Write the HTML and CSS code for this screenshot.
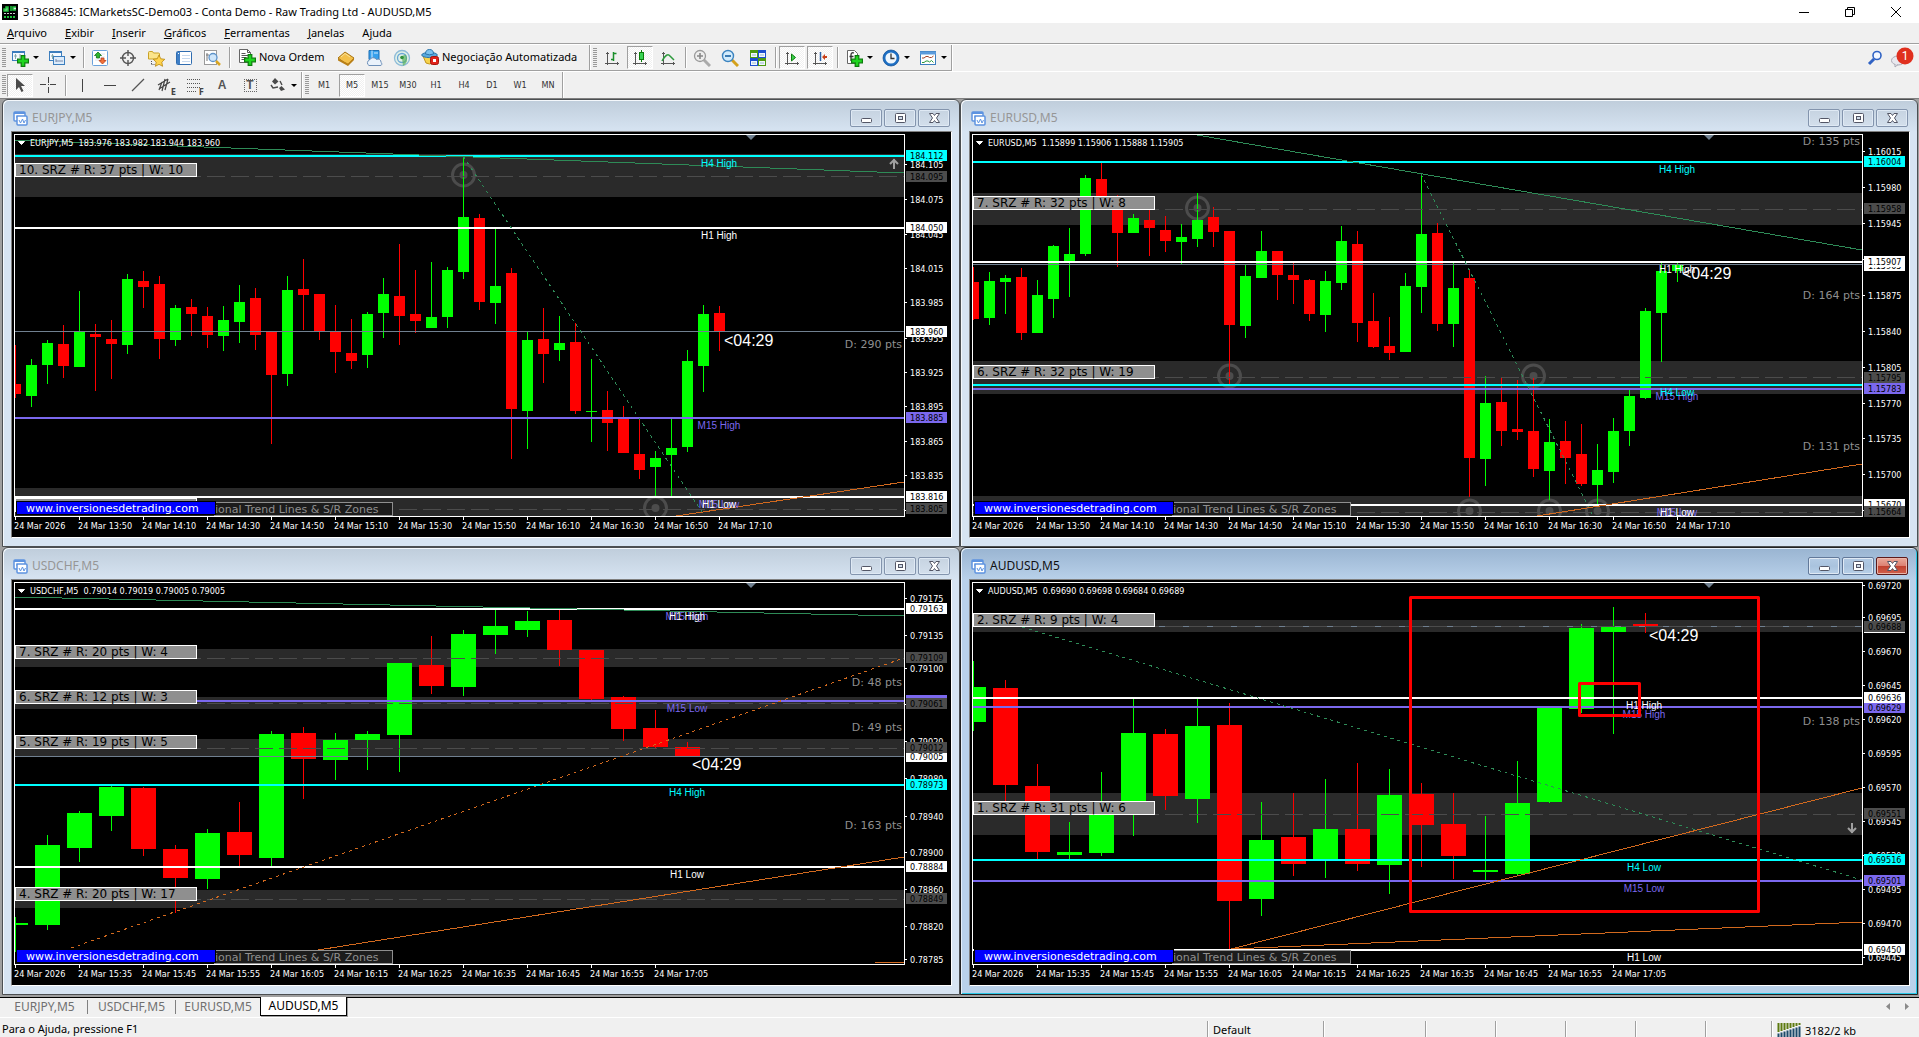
FILE: index.html
```html
<!DOCTYPE html>
<html lang="pt">
<head>
<meta charset="utf-8">
<title>31368845: ICMarketsSC-Demo03 - Conta Demo - Raw Trading Ltd - AUDUSD,M5</title>
<link rel="stylesheet" href="styles.css">
</head>
<body>
<svg class="defs" aria-hidden="true">
  <defs>
    <symbol id="win-min" viewBox="0 0 15 12"><rect x="2.5" y="6.5" width="10" height="4" rx="1" fill="#fff" stroke="#535666"/></symbol>
    <symbol id="win-max" viewBox="0 0 15 12"><rect x="2.5" y="1.500" width="10" height="9" rx="1" fill="#fff" stroke="#535666"/><rect x="5.500" y="4.500" width="4" height="3" fill="#cfdbe8" stroke="#535666"/></symbol>
    <symbol id="win-close" viewBox="0 0 15 12"><path d="M2.500 1.500h3.500l1.500 2 1.500-2h3.500l-3 4.500 3 4.500h-3.500l-1.500-2-1.500 2h-3.500l3-4.500z" fill="#fff" stroke="#535666"/></symbol>
    <symbol id="doc" viewBox="0 0 15 15"><rect x="1" y="1" width="11" height="9" rx="1" fill="#fff" stroke="#5d93e0" stroke-width="1.500"/><path d="M1 2h11" stroke="#5d93e0" stroke-width="2"/><path d="M3 6h1v-2" stroke="#5d93e0" fill="none"/><rect x="4" y="5" width="10" height="9" rx="1" fill="#fff" stroke="#5d93e0" stroke-width="1.500"/><path d="M6 9l1.500 3 2-4 1.500 4 1.500-3" fill="none" stroke="#5d93e0"/></symbol>
    <symbol id="axes" viewBox="0 0 18 18"><path d="M4.500 3v13M2 14.500h14M3 4.500h3M14.500 13v3" fill="none" stroke="#555"/></symbol>
    <symbol id="plus" viewBox="0 0 10 10"><path d="M3.500.500h3v3h3v3h-3v3h-3v-3h-3v-3h3z" fill="#1fd61f" stroke="#0b7d0b"/></symbol>
  </defs>
</svg>

<header class="titlebar">
  <svg class="app-icon" width="16" height="16"><rect width="16" height="16" fill="#000"/><path d="M2 7V5h2V3h2v4zM9 2v5M14 3h-3v3h3" stroke="#1fc23c" fill="#ddd" stroke-width="1.500"/><path d="M2 9.500h12" stroke="#ccc" stroke-dasharray="2 1"/><path d="M2 13h12" stroke="#1fc23c" stroke-width="2" stroke-dasharray="2 1"/></svg>
  <h1>31368845: ICMarketsSC-Demo03 - Conta Demo - Raw Trading Ltd - AUDUSD,M5</h1>
  <button aria-label="Minimizar"><svg width="12" height="12"><path d="M1 6.500h10" stroke="#000"/></svg></button>
  <button aria-label="Restaurar"><svg width="12" height="12"><path d="M1.500 3.500h7v7h-7zM3.500 3v-1.500h7v7h-2" fill="none" stroke="#000"/></svg></button>
  <button aria-label="Fechar"><svg width="12" height="12"><path d="M1 1l10 10M11 1l-10 10" stroke="#000"/></svg></button>
</header>

<nav class="menu">
  <button><u>A</u>rquivo</button><button><u>E</u>xibir</button><button><u>I</u>nserir</button><button><u>G</u>ráficos</button><button><u>F</u>erramentas</button><button><u>J</u>anelas</button><button>A<u>j</u>uda</button>
</nav>

<div class="toolbar">
  <div class="group">
    <span class="grip"></span>
    <button class="drop" aria-label="Novo gráfico"><svg width="18" height="18"><rect x="1.500" y="2.500" width="12" height="9" fill="#f4f9ff" stroke="#3b7dbd"/><path d="M1 3h13" stroke="#3b7dbd" stroke-width="2"/><path d="M4.500 5v5M3 7h3M9 5v4" stroke="#8aa"/><use href="#plus" x="6" y="6" width="12" height="12"/></svg></button>
    <button class="drop" aria-label="Perfis"><svg width="18" height="18"><rect x="1.500" y="2.500" width="12" height="9" fill="#f4f9ff" stroke="#3b7dbd"/><path d="M1 3h13" stroke="#3b7dbd" stroke-width="2"/><path d="M4.500 5v5M3 7h3" stroke="#8aa"/><rect x="5.500" y="7.500" width="11" height="8" fill="#dcebfa" stroke="#3b7dbd"/><path d="M8 12h7M8 10v3" stroke="#78a"/></svg></button>
    <span class="sep"></span>
    <button aria-label="Observação do mercado"><svg width="18" height="18"><rect x="1.500" y="1.500" width="15" height="15" rx="1" fill="#fff" stroke="#6aa2dc"/><path d="M4 5h10M4 8h10M4 11h10" stroke="#dde6f0"/><path d="M7 3l3.500 3.500h-2v2.500h-3V6.500h-2z" fill="#2cb52c" stroke="#12761a" stroke-width=".8"/><path d="M11.500 15l-3.500-3.500h2V9h3v2.500h2z" fill="#f2713a" stroke="#b8401a" stroke-width=".8"/></svg></button>
    <button aria-label="Janela de dados"><svg width="18" height="18"><circle cx="9" cy="9" r="5.500" fill="none" stroke="#555" stroke-width="1.400"/><path d="M9 1v6M9 11v6M1 9h6M11 9h6" stroke="#555" stroke-width="1.400"/></svg></button>
    <button aria-label="Navegador"><svg width="18" height="18"><path d="M1.500 3.500q0-1 1-1h3l1 1.500h5q1 0 1 1v5h-11z" fill="#fbe48a" stroke="#c9a227"/><path d="M4.500 12v4M4.500 15.500h3" stroke="#555" stroke-dasharray="1 1"/><path d="M12 6l1.800 3.800 4 .5-3 2.800.8 4.200-3.600-2-3.600 2 .8-4.200-3-2.800 4-.5z" fill="#ffd34d" stroke="#b8860b" stroke-width=".8"/></svg></button>
    <button aria-label="Terminal"><svg width="18" height="18"><rect x="1.500" y="2.500" width="15" height="13" rx="1" fill="#fff" stroke="#2f6cb0"/><rect x="2" y="3" width="3" height="12" fill="#3f7fc6"/><path d="M7 6.500h8M7 9.500h8M7 12.500h8" stroke="#c6d8ee"/><path d="M3 4.500h1" stroke="#fff"/></svg></button>
    <button aria-label="Testador de estratégia"><svg width="18" height="18"><rect x="1.500" y="1.500" width="12" height="14" fill="#fff" stroke="#9a9a9a"/><path d="M4 4v8M3 6h3M11 4v3" stroke="#777"/><circle cx="10" cy="8.500" r="4" fill="#cfe6fa" stroke="#5e93c9" stroke-width="1.300"/><path d="M13 12l4 4" stroke="#d9a520" stroke-width="2.500"/></svg></button>
    <span class="sep"></span>
    <button class="wide"><svg width="18" height="18"><path d="M1.500 1.500h8l3 3v10h-11z" fill="#fff" stroke="#666"/><path d="M9.500 1.500v3h3M3.500 5.500h4M3.500 7.500h7M3.500 9.500h5M3.500 11.500h4" stroke="#555" fill="none"/><use href="#plus" x="6" y="6" width="12" height="12"/></svg>Nova Ordem</button>
    <button aria-label="MetaEditor"><svg width="18" height="18"><path d="M1 9l7-6 9 6-6 7z" fill="#f3c04a" stroke="#a87412"/><path d="M1 9.500l10 5 6-5.500v2l-6 6-10-5.500z" fill="#b97f16"/><path d="M4 8l4-3.500 5 3.500" fill="none" stroke="#fbe29a"/></svg></button>
    <button aria-label="MQL5"><svg width="18" height="18"><path d="M4 1.500h10v9h-10z" fill="#36a0ec" stroke="#1c6fb5"/><path d="M7 1.500v9M9 4h4" stroke="#cfe9ff"/><path d="M4 16.500a3 3 0 01.5-5.500 4 4 0 017-.5 3 3 0 014.500 3 1.600 1.600 0 01-1 3z" fill="#eaf2fb" stroke="#6d8fb8"/></svg></button>
    <button aria-label="Sinais"><svg width="18" height="18"><circle cx="9" cy="9" r="7.500" fill="#e2f0e6" stroke="#8dbbd8" stroke-width="1.300"/><circle cx="9" cy="9" r="4.500" fill="none" stroke="#6aa6d6" stroke-width="1.300"/><path d="M9 9a3 3 0 014-3 8 8 0 01-3 11" fill="#58b25c" opacity=".7"/><circle cx="9" cy="8.500" r="1.800" fill="#2f8f3c"/></svg></button>
    <button class="wide auto"><svg width="18" height="18"><path d="M2 8h13l-3 7q-3.500 2-7 0z" fill="#f6d34c" stroke="#c1951d"/><ellipse cx="8.500" cy="7" rx="7.800" ry="2.600" fill="#59a9dd" stroke="#2c76ab"/><path d="M4.500 6q0-4.500 4-4.500t4 4.500q-4 1.600-8 0z" fill="#7cc2ee" stroke="#2c76ab"/><rect x="9.500" y="8.500" width="8" height="8" rx="2" fill="#e2231a" stroke="#a5130c"/><rect x="12" y="11" width="3" height="3" fill="#fff"/></svg>Negociação Automatizada</button>
  </div>
  <div class="group">
    <span class="grip"></span>
    <button aria-label="Barras"><svg width="18" height="18"><use href="#axes"/><path d="M10.500 3v9M8 10.500h2M11 4.500h2.500" stroke="#1a8f2a" stroke-width="1.500"/></svg></button>
    <button class="on" aria-label="Velas"><svg width="18" height="18"><use href="#axes"/><path d="M10.500 1v12" stroke="#0b7d0b"/><rect x="8.500" y="3.500" width="4" height="7" fill="#39d353" stroke="#0b7d0b"/></svg></button>
    <button aria-label="Linha"><svg width="18" height="18"><use href="#axes"/><path d="M3 12q5-9 8-5l4 4" fill="none" stroke="#2c9a3c" stroke-width="1.500"/></svg></button>
    <span class="sep"></span>
    <button aria-label="Ampliar"><svg width="18" height="18"><path d="M11 11l6 6" stroke="#aaa" stroke-width="3"/><circle cx="7" cy="7" r="5.500" fill="#eee" stroke="#999" stroke-width="1.300"/><path d="M4 7h6M7 4v6" stroke="#888" stroke-width="1.600"/></svg></button>
    <button aria-label="Reduzir"><svg width="18" height="18"><path d="M11 11l6 6" stroke="#d4a11c" stroke-width="3"/><circle cx="7" cy="7" r="5.500" fill="#d3ecfc" stroke="#3b83bf" stroke-width="1.400"/><path d="M4 7h6" stroke="#2a6fab" stroke-width="1.800"/></svg></button>
    <button aria-label="Lado a lado"><svg width="18" height="18"><rect x="1" y="1" width="8" height="8" fill="#4c9a12"/><rect x="9" y="1" width="8" height="8" fill="#1d4fd0"/><rect x="1" y="9" width="8" height="8" fill="#1d4fd0"/><rect x="9" y="9" width="8" height="8" fill="#4c9a12"/><path d="M2 4h6v4h-6zM10 4h6v4h-6zM2 12h6v4h-6zM10 12h6v4h-6z" fill="#f2f7ff"/><path d="M3 6h4M11 6h4M3 14h4M11 14h4" stroke="#9bc"/></svg></button>
    <span class="sep"></span>
    <button class="on" aria-label="Auto-rolagem"><svg width="18" height="18"><use href="#axes"/><path d="M8.500 5l4 3.500-4 3.500z" fill="#3ccf4e" stroke="#0b7d0b"/></svg></button>
    <button class="on" aria-label="Deslocar gráfico"><svg width="18" height="18"><use href="#axes"/><path d="M9.500 3v9" stroke="#2a62a8" stroke-width="1.500"/><path d="M11 8l3-3v2h2v2h-2v2z" fill="#c8401a"/></svg></button>
    <span class="sep"></span>
    <button class="drop" aria-label="Indicadores"><svg width="18" height="18"><path d="M2.500 1.500h7l3 3v10h-10z" fill="#fff" stroke="#666"/><path d="M9 4q-3-1-3 2v6M4.500 7.500h4" fill="none" stroke="#333" stroke-width="1.300"/><use href="#plus" x="6" y="6" width="12" height="12"/></svg></button>
    <button class="drop" aria-label="Períodos"><svg width="18" height="18"><circle cx="9" cy="9" r="6.800" fill="#eef6fd" stroke="#1d6fc4" stroke-width="2.400"/><circle cx="9" cy="9" r="8" fill="none" stroke="#0f4d94" stroke-width=".7"/><path d="M9 4.500v5h3.500" fill="none" stroke="#333" stroke-width="1.300"/></svg></button>
    <button class="drop" aria-label="Modelos"><svg width="18" height="18"><rect x="1.500" y="2.500" width="15" height="13" fill="#fff" stroke="#3b7dbd"/><path d="M1 4h16" stroke="#5b9bdc" stroke-width="3"/><path d="M3 9h2l2-1.500h2l1.500 1h2l2-1.500" fill="none" stroke="#a5432a"/><path d="M3 13.500h2l2-1.500h2l1.500 1 2-1.500 2 2" fill="none" stroke="#2c9a3c"/></svg></button>
  </div>
  <div class="corner">
    <button aria-label="Pesquisar"><svg width="16" height="18"><path d="M2 15l5-5" stroke="#2f62c4" stroke-width="3"/><circle cx="10" cy="6.500" r="4" fill="#f4f8ff" stroke="#2f62c4" stroke-width="1.600"/></svg></button>
    <button aria-label="Mensagens"><svg width="24" height="24"><ellipse cx="8" cy="15.500" rx="6.500" ry="4.500" fill="#e8e8ee" stroke="#a9a9b4"/><path d="M5 19v3l3-2.500" fill="#e8e8ee" stroke="#a9a9b4"/><circle cx="15" cy="11" r="8.500" fill="#e0301e"/></svg><b>1</b></button>
  </div>
</div>

<div class="toolbar second">
  <div class="group">
    <span class="grip"></span>
    <button class="on" aria-label="Cursor"><svg width="18" height="18"><path d="M5 2v12l3-3 2.500 5 2-1-2.500-5h4z" fill="#4a4a4a"/></svg></button>
    <button aria-label="Mira"><svg width="18" height="18"><path d="M9.500 1v6M9.500 11v6M1 8.500h6M11 8.500h6M9 8.500h1" stroke="#444"/></svg></button>
    <span class="sep"></span>
    <button aria-label="Linha vertical"><svg width="18" height="18"><path d="M9.500 3v13" stroke="#444"/></svg></button>
    <button aria-label="Linha horizontal"><svg width="18" height="18"><path d="M3 9.500h12" stroke="#444"/></svg></button>
    <button aria-label="Linha de tendência"><svg width="18" height="18"><path d="M3 15L15 3" stroke="#555" stroke-width="1.200"/></svg></button>
    <button class="tagged" aria-label="Canal"><svg width="18" height="18"><path d="M1 9L11 3M2 13L13 6M5 15L8 3M8 14l3-11M2 14l3-8" stroke="#444" stroke-width="1.200"/></svg><small>E</small></button>
    <button class="tagged" aria-label="Fibonacci"><svg width="18" height="18"><path d="M2 3.500h14M2 7.500h14M2 11.500h14M2 15.500h9" stroke="#555" stroke-dasharray="1 1"/></svg><small>F</small></button>
    <button class="glyph">A</button>
    <button class="glyph box"><span>T</span></button>
    <button class="drop" aria-label="Setas"><svg width="18" height="18"><path d="M6 2l3.500 3.500-3.500 3-3-3zM12.500 10l3.500 3.500-4 1.500-2-3z" fill="#4a4a4a"/><path d="M2 9l2 3 5-1M11 5l2 4" stroke="#4a4a4a" fill="none" stroke-width="1.400"/></svg></button>
  </div>
  <div class="group frames">
    <span class="grip"></span>
    <button>M1</button><button class="on">M5</button><button>M15</button><button>M30</button><button>H1</button><button>H4</button><button>D1</button><button>W1</button><button>MN</button>
  </div>
</div>

<main class="desk">
  <section class="window">
    <div class="caption"><svg width="15" height="15"><use href="#doc"/></svg><h2>EURJPY,M5</h2>
      <button aria-label="Minimizar"><svg width="15" height="12"><use href="#win-min"/></svg></button><button aria-label="Maximizar"><svg width="15" height="12"><use href="#win-max"/></svg></button><button aria-label="Fechar"><svg width="15" height="12"><use href="#win-close"/></svg></button></div>
    <div class="frame" data-chart="eurjpy"></div>
  </section>
  <section class="window">
    <div class="caption"><svg width="15" height="15"><use href="#doc"/></svg><h2>EURUSD,M5</h2>
      <button aria-label="Minimizar"><svg width="15" height="12"><use href="#win-min"/></svg></button><button aria-label="Maximizar"><svg width="15" height="12"><use href="#win-max"/></svg></button><button aria-label="Fechar"><svg width="15" height="12"><use href="#win-close"/></svg></button></div>
    <div class="frame" data-chart="eurusd"></div>
  </section>
  <section class="window">
    <div class="caption"><svg width="15" height="15"><use href="#doc"/></svg><h2>USDCHF,M5</h2>
      <button aria-label="Minimizar"><svg width="15" height="12"><use href="#win-min"/></svg></button><button aria-label="Maximizar"><svg width="15" height="12"><use href="#win-max"/></svg></button><button aria-label="Fechar"><svg width="15" height="12"><use href="#win-close"/></svg></button></div>
    <div class="frame" data-chart="usdchf"></div>
  </section>
  <section class="window active">
    <div class="caption"><svg width="15" height="15"><use href="#doc"/></svg><h2>AUDUSD,M5</h2>
      <button aria-label="Minimizar"><svg width="15" height="12"><use href="#win-min"/></svg></button><button aria-label="Maximizar"><svg width="15" height="12"><use href="#win-max"/></svg></button><button class="close" aria-label="Fechar"><svg width="15" height="12"><use href="#win-close"/></svg></button></div>
    <div class="frame" data-chart="audusd"></div>
  </section>
</main>

<div class="tabs">
  <button>EURJPY,M5</button><button>USDCHF,M5</button><button>EURUSD,M5</button><button class="current">AUDUSD,M5</button>
  <span class="scroll"><svg width="24" height="8"><path d="M5 0v7L1 3.500zM20 0v7l4-3.500z" fill="#8a8a8a"/></svg></span>
</div>

<footer class="status">
  <span class="help">Para o Ajuda, pressione F1</span>
  <span class="cell c116">Default</span><span class="cell c102"></span><span class="cell c71"></span><span class="cell c71"></span><span class="cell c71"></span><span class="cell c71"></span><span class="cell c66"></span>
  <span class="cell net"><svg width="24" height="14"><path d="M1.500 0v9M4.500 0v8M7.500 0v7M10.500 0v6M13.500 0v5M16.500 0v4M19.500 0v3M22.500 0v2" stroke="#5d7a10" stroke-width="2"/><path d="M1.500 10.500V14M4.500 9.500V14M7.500 8.500V14M10.500 7.500V14M13.500 6.500V14M16.500 5.500V14M19.500 4.500V14M22.500 3.500V14" stroke="#1d4a6b" stroke-width="2"/></svg>3182/2 kb</span>
</footer>
<script src="charts.js"></script>
</body>
</html>
```
FILE: styles.css
```css
* { box-sizing: border-box; }
html, body { height: 100%; margin: 0; }
body {
  display: flex;
  flex-direction: column;
  min-height: 100vh;
  overflow: hidden;
  background: #f0f0f0;
  color: #000;
  font: 11px/16px "Noto Sans", "Open Sans", sans-serif;
}
button { padding: 0; border: 0; background: none; font: inherit; color: inherit; }
svg { display: block; }
h1, h2 { margin: 0; font: inherit; }
.defs { position: absolute; width: 0; height: 0; }

.titlebar { display: flex; align-items: center; height: 23px; padding-left: 2px; background: #fff; }
.titlebar h1 { flex: 1; padding: 1px 0 0 5px; }
.titlebar button { display: grid; place-items: center; width: 46px; height: 20px; }

.menu { display: flex; height: 21px; border-bottom: 1px solid #a0a0a0; }
.menu button { padding: 0 9px; line-height: 20px; }
.menu button:first-child { padding-left: 7px; }

.toolbar { display: flex; height: 27px; border-top: 1px solid #fff; }
.group { display: flex; align-items: center; padding-left: 2px; border-right: 1px solid #a0a0a0; border-bottom: 1px solid #a0a0a0; box-shadow: 1px 0 #fff; }
.second .group { border-bottom: 0; }
.group + .group { padding-left: 3px; }
.group + .group .grip { margin-right: 1px; }
.grip { width: 4px; height: 20px; background: repeating-linear-gradient(#999 0 1px, #f0f0f0 1px 2px); }
.sep { width: 6px; height: 21px; background: linear-gradient(90deg, transparent 3px, #a0a0a0 3px 4px, #fff 4px 5px, transparent 5px); }
.group button { display: flex; align-items: center; justify-content: center; width: 28px; height: 23px; position: relative; }
.group .drop { width: 37px; justify-content: flex-start; gap: 4px; padding-left: 5px; }
.drop::after { content: ""; border: 3px solid transparent; border-top-color: #000; border-bottom: 0; }
.group .wide { width: 100px; justify-content: flex-start; gap: 3px; padding: 0 0 1px 6px; }
.group .auto { width: 173px; padding-left: 5px; }
.group .on { width: 26px; margin: 0 1px; border: 1px solid #a0a0a0; border-right-color: #fff; border-bottom-color: #fff; background: repeating-conic-gradient(#fff 0 25%, #f0f0f0 0 50%) 0 0 / 2px 2px; }
.tagged small { position: absolute; right: 4px; bottom: 0; font: bold 8px/8px "DejaVu Sans Condensed", sans-serif; color: #444; background: #f0f0f0; }
.group .glyph { font: bold 12px/16px "Liberation Sans", sans-serif; color: #555; }
.box span { width: 13px; line-height: 11px; border: 1px dotted #666; }
.group.frames button { font: 9px/12px "DejaVu Sans Condensed", sans-serif; color: #333; }
.corner { display: flex; margin-left: auto; gap: 7px; padding-right: 5px; }
.corner button { position: relative; display: flex; align-items: flex-start; padding-top: 4px; }
.corner button + button { padding-top: 0; }
.corner b { position: absolute; left: 7px; top: 3px; width: 16px; text-align: center; color: #fff; font: 12px/16px Roboto, sans-serif; }

.desk {
  flex: 1;
  display: grid;
  grid-template: 1fr 1fr / 1fr 1fr;
  min-height: 0;
  padding: 0 1px 2px 2px;
  background: #a0a0a0;
  border-top: 1px solid #808080;
}
.window {
  display: flex;
  flex-direction: column;
  min-width: 0;
  min-height: 0;
  padding: 0 7px 8px 8px;
  border: 1px solid #4c4f52;
  border-radius: 6px 6px 0 0;
  background: linear-gradient(#bfcddb, #d7e4f2 32px);
  box-shadow: inset 1px 1px #f4f8fc;
}
.window.active { background: linear-gradient(#99b4d1, #b9d1ea 32px); border-color: #222; box-shadow: inset 1px 1px #e4effa, inset -1px -1px #29c7e6; }
.caption { display: flex; align-items: center; height: 31px; padding: 5px 2px 0 2px; color: #969696; }
.active .caption { color: #111; }
.caption h2 { flex: 1; padding-left: 4px; font-size: 12px; }
.caption button { display: grid; place-items: center; width: 32px; height: 18px; margin-left: 2px; border: 1px solid #8394ad; border-radius: 2px; box-shadow: inset 0 0 0 1px #dfe9f4; background: linear-gradient(#c6d3e1, #d3dfec); }
.active .caption button { background: linear-gradient(#b4cbe4, #a9c3de 50%, #b9d0e8); border-color: #62799a; }
.active .caption .close { background: linear-gradient(#e9a99a, #dd8173 48%, #c0402e 50%, #d0604c); border-color: #5d1a1a; box-shadow: inset 0 0 0 1px #e9b5a9; }

.frame {
  flex: 1;
  display: grid;
  grid-template: 1fr 20px / 1fr 46px;
  min-height: 0;
  padding: 2px 0 0 2px;
  background: #000;
  border: 1px solid #808080;
  border-right-color: #fff;
  border-bottom-color: #fff;
}
.plot { border: 1px solid #fff; min-width: 0; min-height: 0; overflow: hidden; }
.plot svg, .prices, .times { width: 100%; height: 100%; overflow: hidden; }
.prices, .times { overflow: visible; }
.up { fill: #0f0; }
.down { fill: #f00; }
.zone { fill: #2a2a2a; }
.dash { stroke: #4c4c4c; stroke-dasharray: 18 6; }
.bid { stroke: #708090; }
.level { stroke-width: 2; }
.ring { fill: none; stroke: #4c4c4c; stroke-width: 3; }
.dot, .tag-gray { fill: #4c4c4c; }
.trend { fill: none; shape-rendering: crispEdges; }
.dotted { stroke-dasharray: 3 4; }
.green { stroke: #2e8b57; }
.orange { stroke: #d2691e; }
.shift { fill: #708090; }
.white { fill: #fff; stroke: #fff; }
.cyan { fill: #0ff; stroke: #0ff; }
.purple { fill: #7b68ee; stroke: #7b68ee; }
.frame text { stroke: none; white-space: pre; }
.small { font: 9px "DejaVu Sans Condensed", sans-serif; fill: #fff; }
.small.ink { fill: #000; }
.tick { stroke: #fff; }
.level-name { font: 10px "Liberation Sans", sans-serif; text-anchor: middle; }
.timer { font: 16px "Liberation Sans", sans-serif; fill: #fff; }
.distance { font: 11px "DejaVu Sans", sans-serif; fill: #8f8f8f; text-anchor: end; }
.plate { fill: #8f8f8f; stroke: #fff; }
.plate-text { font: 12px "DejaVu Sans", sans-serif; fill: #000; }
.brand { fill: #00f; stroke: #000; }
.brand-text { font: 11px "DejaVu Sans", sans-serif; fill: #fff; }
.note { fill: #1c1c1c; stroke: #8f8f8f; }
.note-text { font: 11px "DejaVu Sans", sans-serif; fill: #8f8f8f; }
.arrow { fill: none; stroke: #a0a0a0; stroke-width: 2; }
.mark { fill: none; stroke: #f00; stroke-width: 3; stroke-linejoin: round; }

.tabs { display: flex; height: 20px; padding-left: 2px; border-top: 1px solid #000; color: #707070; font-size: 12px; }
.tabs button { width: 85px; height: 14px; margin-top: 2px; line-height: 14px; }
.tabs button:nth-child(2) { width: 88px; }
.tabs button + button { border-left: 1px solid #808080; }
.tabs button.current { width: 87px; height: 19px; margin-top: -1px; line-height: 18px; background: #fff; color: #000; border: 1px solid #000; border-top: 0; box-shadow: 1px 1px #a0a0a0; }
.scroll { margin: 5px 10px 0 auto; }

.status { display: flex; height: 20px; border-top: 1px solid #fff; line-height: 20px; padding-top: 1px; }
.help { flex: 1; padding-left: 2px; }
.cell { height: 18px; margin-top: 2px; padding-left: 5px; line-height: 17px; border-left: 1px solid #a0a0a0; box-shadow: inset 1px 0 #fff; }
.c116 { width: 116px; }
.c102 { width: 102px; }
.c71 { width: 70px; }
.c66 { width: 66px; }
.net { display: flex; align-items: center; gap: 4px; width: 148px; }
```
FILE: charts.js
```js
// Vertical values are stored at three units per pixel, measured from `top`.
// Candle rows: direction high low bodyTop bodyBottom.
const charts = {
  eurjpy: {
    top: 105, step: 16, body: 11,
    title: "EURJPY,M5  183.976 183.982 183.944 183.960",
    candles: `d 735 893 852 882,u 777 921 795 888,u 720 852 729 795,d 675 834 732 798,u 573 801 696 801,d 672 873 702 711,d 660 837 717 732,u 522 762 537 735,d 513 624 543 561,d 528 777 552 717,u 615 738 624 720,d 597 708 621 642,d 621 744 648 705,u 618 753 660 708,u 555 729 606 666,d 564 750 594 705,d 693 1032 693 825,u 528 858 570 822,d 477 690 567 585,d 582 720 582 693,d 615 819 693 756,d 657 807 759 783,u 636 804 642 765,u 534 714 582 639,d 432 735 588 648,d 510 699 642 663,u 486 684 651 684,u 501 684 510 651,u 168 537 351 516,d 342 630 354 606,u 387 672 558 609,d 504 1077 519 927,u 696 1047 720 933,d 624 849 717 762,u 648 783 729 750,d 669 942 726 933,u 777 1026 933 936,d 873 1053 930 969,d 918 1059 954 1059,d 960 1137 1062 1110,u 1053 1188 1074 1101,u 957 1188 1044 1065,u 750 1056 783 1041,u 615 876 642 798,d 618 753 639 696`,
    zones: [[162, 291, 230], [1164, 1248, 1228]],
    bid: 694,
    rings: [[28, 224], [40, 1223]],
    levels: [["white", 1191], ["purple", 954], ["white", 384], ["cyan", 168]],
    names: [["cyan", 168, "H4 High"], ["white", 384, "H1 High"], ["purple", 954, "M15 High"], ["purple", 1191, "M15 Low"], ["white", 1191, "H1 Low"]],
    trends: [["green", 0, 119, 889, 220], ["green dotted", 448, 168, 687, 1235], ["orange", 661, 1247, 889, 1147]],
    plates: [[189, "10. SRZ # R: 37 pts | W: 10"], [1194, ""]],
    distances: [[745, "D: 290 pts"]],
    timer: [709, 738],
    arrow: [879, 191, -1],
    prices: [[193, "184.105"], [298, "184.075"], [401, "184.045"], [505, "184.015"], [607, "183.985"], [713, "183.955"], [817, "183.925"], [919, "183.895"], [1024, "183.865"], [1126, "183.835"], [1230, ""]],
    tags: [["cyan", 166, "184.112"], ["tag-gray", 227, "184.095"], ["white", 382, "184.050"], ["white", 694, "183.960"], ["purple", 952, "183.885"], ["white", 1189, "183.816"], ["tag-gray", 1225, "183.805"]],
    clock: [13, 50, 20, 12]
  },
  eurusd: {
    top: 105, step: 16, body: 11,
    title: "EURUSD,M5  1.15899 1.15906 1.15888 1.15905",
    candles: `d 500 660 546 657,u 516 675 543 654,u 525 642 534 546,d 504 720 531 699,u 540 699 585 699,u 435 654 438 597,u 384 591 462 486,u 225 468 234 462,d 189 325 237 325,d 285 501 300 399,u 342 399 354 399,d 330 468 360 384,d 348 456 390 423,u 372 492 411 426,u 279 441 360 417,d 321 441 351 396,d 393 855 393 675,u 492 714 528 678,u 393 534 453 534,d 453 600 453 525,d 490 612 525 540,d 537 663 540 642,u 513 696 543 645,u 378 570 423 549,d 393 726 432 669,d 579 744 663 741,d 651 780 738 759,u 519 756 558 756,u 219 639 402 561,d 369 693 399 672,u 489 741 564 672,d 507 1191 534 1074,u 828 1158 909 1077,d 831 1038 906 993,d 840 1020 987 996,d 834 1131 993 1107,u 957 1200 1026 1113,d 963 1152 1023 1074,d 972 1158 1062 1152,u 1032 1212 1110 1155,u 954 1149 993 1116,u 870 1038 888 993,u 624 897 633 894,u 489 786 513 639,u 489 546 492 513`,
    zones: [[279, 375, 328], [783, 882, 832], [1188, 1248, 1238]],
    bid: 493,
    rings: [[14, 324], [16, 828], [35, 828], [31, 1233], [36, 1233], [39, 1233]],
    levels: [["white", 1215], ["purple", 867], ["cyan", 855], ["white", 486], ["cyan", 186]],
    names: [["cyan", 186, "H4 High"], ["white", 486, "H1 High"], ["purple", 867, "M15 High"], ["cyan", 855, "H4 Low"], ["purple", 1215, "M15 Low"], ["white", 1215, "H1 Low"]],
    trends: [["green", 224, 105, 889, 451], ["green dotted", 448, 222, 620, 1248], ["orange", 564, 1247, 889, 1091]],
    plates: [[289, "7. SRZ # R: 32 pts | W: 8"], [796, "6. SRZ # R: 32 pts | W: 19"]],
    distances: [[135, "D: 135 pts"], [597, "D: 164 pts"], [1050, "D: 131 pts"]],
    timer: [709, 537],
    prices: [[154, "1.16015"], [262, "1.15980"], [370, "1.15945"], [478, ""], [586, "1.15875"], [694, "1.15840"], [802, "1.15805"], [910, "1.15770"], [1015, "1.15735"], [1123, "1.15700"], [1231, ""]],
    tags: [["cyan", 184, "1.16004"], ["tag-gray", 325, "1.15958"], ["white", 494, "1.15905"], ["white", 484, "1.15907"], ["cyan", 862, ""], ["tag-gray", 830, "1.15795"], ["purple", 865, "1.15783"], ["white", 1213, "1.15670"], ["tag-gray", 1234, "1.15664"]],
    clock: [13, 50, 20, 12]
  },
  usdchf: {
    top: 114, step: 32, body: 25,
    title: "USDCHF,M5  0.79014 0.79019 0.79005 0.79005",
    candles: `u 1116 1222 1134 1140,u 870 1155 900 1140,u 798 951 804 909,u 722 858 726 813,d 726 933 729 912,d 900 1104 912 999,u 852 1032 864 1002,d 771 963 861 930,u 558 963 567 939,d 546 762 564 642,u 564 705 585 645,u 558 675 567 585,u 354 681 354 570,d 273 447 360 423,u 255 453 267 426,u 195 327 243 270,u 198 276 228 255,d 195 363 225 315,d 315 465 315 462,d 453 588 456 552,d 495 609 549 606,d 591 633 606 633`,
    zones: [[312, 366, 340], [456, 492, 475], [582, 636, 610], [1035, 1089, 1063]],
    bid: 632,
    rings: [],
    levels: [["white", 966], ["cyan", 720], ["purple", 468], ["white", 192]],
    names: [["purple", 192, "M15 High"], ["white", 192, "H1 High"], ["purple", 468, "M15 Low"], ["cyan", 720, "H4 High"], ["white", 966, "H1 Low"]],
    trends: [["green", 0, 157, 889, 214], ["orange dotted", 56, 1208, 889, 340], ["orange", 303, 1214, 889, 937], ["orange", 860, 1255, 889, 1251]],
    plates: [[301, "7. SRZ # R: 20 pts | W: 4"], [436, "6. SRZ # R: 12 pts | W: 3"], [571, "5. SRZ # R: 19 pts | W: 5"], [1027, "4. SRZ # R: 20 pts | W: 17"]],
    distances: [[424, "D: 48 pts"], [558, "D: 49 pts"], [853, "D: 163 pts"]],
    timer: [677, 675],
    prices: [[158, "0.79175"], [269, "0.79135"], [368, "0.79100"], [478, ""], [588, "0.79020"], [699, "0.78980"], [812, "0.78940"], [922, "0.78900"], [1033, "0.78860"], [1144, "0.78820"], [1243, "0.78785"]],
    tags: [["white", 190, "0.79163"], ["tag-gray", 337, "0.79109"], ["purple", 466, ""], ["tag-gray", 473, "0.79061"], ["white", 632, "0.79005"], ["tag-gray", 607, "0.79012"], ["cyan", 718, "0.78973"], ["white", 964, "0.78884"], ["tag-gray", 1060, "0.78849"]],
    clock: [15, 35, 10, 11]
  },
  audusd: {
    top: 114, step: 32, body: 25,
    title: "AUDUSD,M5  0.69690 0.69698 0.69684 0.69689",
    candles: `u 348 558 426 531,d 405 780 429 720,d 657 942 723 921,u 831 942 921 930,u 681 933 805 924,u 462 873 564 800,d 552 795 567 753,u 462 834 543 762,d 474 1213 540 1068,u 771 1113 885 1062,d 744 993 876 957,u 702 999 852 942,d 654 978 852 957,u 672 1047 750 960,d 714 966 747 840,d 744 1002 837 933,u 813 1005 975 981,u 648 993 774 987,u 489 774 489 771,u 237 504 249 492,u 186 567 246 261,d 204 264 237 243`,
    zones: [[225, 261, 244], [744, 870, 808]],
    bid: 244,
    rings: [],
    levels: [["white", 1215], ["purple", 1008], ["cyan", 945], ["purple", 486], ["white", 459]],
    names: [["white", 459, "H1 High"], ["purple", 486, "M15 High"], ["cyan", 945, "H4 Low"], ["purple", 1008, "M15 Low"], ["white", 1215, "H1 Low"]],
    trends: [["green dotted", 49, 246, 889, 1005], ["orange", 258, 1213, 889, 729], ["orange", 258, 1213, 889, 1132]],
    plates: [[205, "2. SRZ # R: 9 pts | W: 4"], [769, "1. SRZ # R: 31 pts | W: 6"]],
    distances: [[540, "D: 138 pts"]],
    timer: [676, 288],
    arrow: [879, 848, 1],
    marks: [[437, 155, 348, 942], [606, 413, 60, 96]],
    prices: [[119, "0.69720"], [217, "0.69695"], [319, "0.69670"], [421, "0.69645"], [523, "0.69620"], [625, "0.69595"], [727, "0.69570"], [829, "0.69545"], [931, "0.69520"], [1033, "0.69495"], [1135, "0.69470"], [1237, "0.69445"]],
    tags: [["white", 245, ""], ["tag-gray", 242, "0.69688"], ["purple", 485, "0.69629"], ["white", 457, "0.69636"], ["tag-gray", 805, "0.69551"], ["cyan", 943, "0.69516"], ["purple", 1006, "0.69501"], ["white", 1213, "0.69450"]],
    clock: [15, 35, 10, 11]
  }
};

function add(parent, tag, cls, attrs = {}, text) {
  const node = document.createElementNS("http://www.w3.org/2000/svg", tag);
  if (cls) node.setAttribute("class", cls);
  for (const key in attrs) node.setAttribute(key, attrs[key]);
  if (text !== undefined) node.textContent = text;
  parent.append(node);
  return node;
}

function drawChart(frame, c) {
  const y = v => Math.round((v - c.top) / 3);
  const holder = document.createElement("div");
  holder.className = "plot";
  frame.append(holder);
  const plot = add(holder, "svg");
  const rule = (cls, v, shift) => add(plot, "line", cls, { x1: 0, x2: "100%", y1: y(v) + shift, y2: y(v) + shift });

  for (const [a, b] of c.zones) add(plot, "rect", "zone", { x: 0, y: y(a), width: "100%", height: y(b) - y(a) });
  for (const [k, v] of c.rings) {
    add(plot, "circle", "ring", { cx: k * c.step + 0.5, cy: y(v), r: 11 });
    add(plot, "circle", "dot", { cx: k * c.step + 0.5, cy: y(v), r: 4 });
  }
  c.candles.split(",").forEach((row, k) => {
    const [dir, ...v] = row.split(" ");
    const [high, low, top, bottom] = v.map(Number).map(y);
    const cls = dir === "u" ? "up" : "down";
    const x = k * c.step;
    add(plot, "rect", cls, { x, y: high, width: 1, height: Math.max(low - high, 1) });
    add(plot, "rect", cls, { x: x - (c.body - 1) / 2, y: top, width: c.body, height: Math.max(bottom - top, 1) });
  });
  rule("bid", c.bid, 0.5);
  for (const z of c.zones) rule("dash", z[2] - 1, 0.5);
  for (const [color, v] of c.levels) rule("level " + color, v, 0);
  for (const [cls, x1, v1, x2, v2] of c.trends) add(plot, "line", "trend " + cls, { x1, y1: y(v1), x2, y2: y(v2) });
  const nameX = c.timer[0] - 5;
  for (const [color, v, label] of c.names) add(plot, "text", "level-name " + color, { x: nameX, y: y(v) + 11 }, label);
  for (const [v, label] of c.distances) add(plot, "text", "distance", { x: "100%", dx: -2, y: y(v) }, label);
  add(plot, "text", "timer", { x: c.timer[0], y: y(c.timer[1]) }, "<04:29");
  for (const [v, label] of c.plates) {
    add(plot, "rect", "plate", { x: 0.5, y: y(v) + 0.5, width: 181, height: 13 });
    if (label) add(plot, "text", "plate-text", { x: 4, y: y(v) + 11 }, label);
  }
  add(plot, "path", "white", { d: "M3.5 6.5h6l-3 3z", "stroke-width": 1 });
  add(plot, "text", "small", { x: 15, y: 11 }, c.title);
  add(plot, "path", "shift", { d: "M731 0h10l-5 5z" });
  add(plot, "rect", "note", { x: 199.5, y: 367.5, width: 178, height: 13 });
  add(plot, "text", "note-text", { x: 200, y: 378 }, "ional Trend Lines & S/R Zones");
  add(plot, "rect", "brand", { x: 1.5, y: 366.5, width: 199, height: 13 });
  add(plot, "text", "brand-text", { x: 11, y: 377 }, "www.inversionesdetrading.com");
  if (c.arrow) {
    const [x, v, s] = c.arrow;
    add(plot, "path", "arrow", { d: `M${x} ${y(v) - 5 * s}v${10 * s}M${x - 4} ${y(v)}l4 ${4 * s}l4 ${-4 * s}` });
  }
  for (const [x, v, w, h] of c.marks || []) add(plot, "rect", "mark", { x: x + 0.5, y: y(v) + 0.5, width: w, height: h / 3 });

  const prices = add(frame, "svg", "prices");
  for (const [v, label] of c.prices) {
    add(prices, "line", "tick", { x1: 0, x2: 2, y1: y(v) + 1.5, y2: y(v) + 1.5 });
    if (label) add(prices, "text", "small", { x: 5, y: y(v) + 5 }, label);
  }
  for (const [cls, v, label] of c.tags) {
    add(prices, "rect", cls, { x: 1, y: y(v) - 4, width: 41, height: 11, "stroke-width": 0 });
    if (label) add(prices, "text", "small ink", { x: 5, y: y(v) + 5 }, label);
  }

  const times = add(frame, "svg", "times");
  const [hour, minute, gap, count] = c.clock;
  for (let i = 0; i < count; i++) {
    const t = hour * 60 + minute + (i - 1) * gap;
    const label = i ? `24 Mar ${Math.floor(t / 60)}:${String(t % 60).padStart(2, "0")}` : "24 Mar 2026";
    add(times, "line", "tick", { x1: i * 64 + 1.5, x2: i * 64 + 1.5, y1: 0, y2: 3 });
    add(times, "text", "small", { x: i * 64, y: 12 }, label);
  }
}

document.querySelectorAll("[data-chart]").forEach(frame => drawChart(frame, charts[frame.dataset.chart]));
```
